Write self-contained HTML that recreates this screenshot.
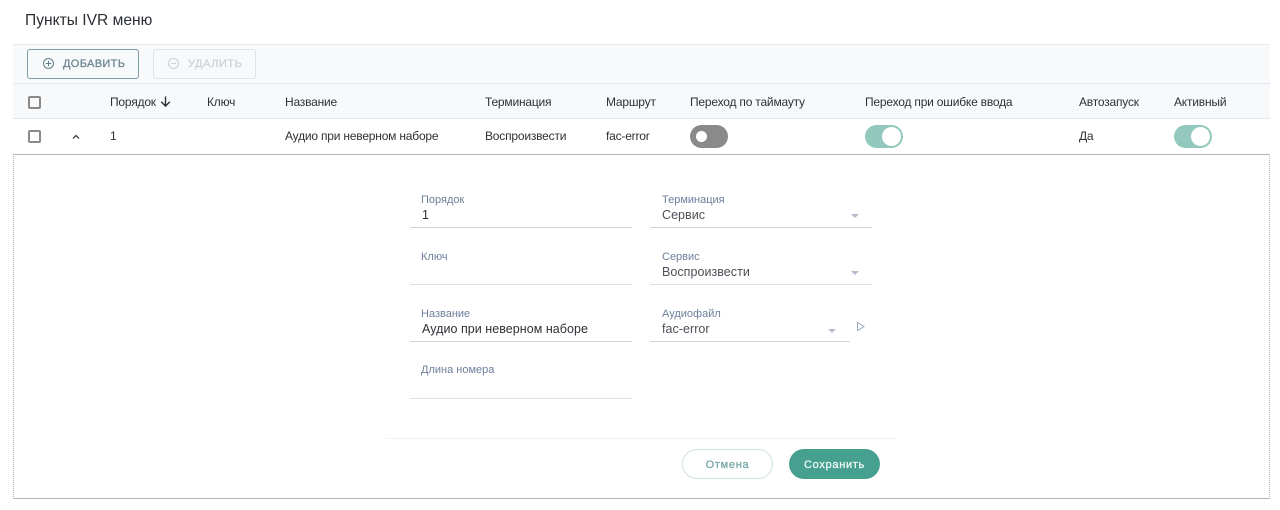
<!DOCTYPE html>
<html lang="ru"><head><meta charset="utf-8"><title>Пункты IVR меню</title>
<style>
html,body{margin:0;padding:0;width:1280px;height:510px;overflow:hidden;background:#fff}
body{font-family:"Liberation Sans","Noto Sans CJK SC",sans-serif;color:#2b2f33;position:relative}
.a{position:absolute;white-space:nowrap}
.th,.td{font-size:12px;line-height:16px;color:#2d3136;letter-spacing:-.2px}
.th{top:94px}.td{top:128px}
.cb{position:absolute;left:28px;width:9px;height:9px;border:2px solid #8a8a8a;border-radius:2px;box-sizing:content-box}
.sw{position:absolute;top:125px;width:38px;height:23px;border-radius:12px}
.sw i{position:absolute;top:2px;width:19px;height:19px;border-radius:50%;background:#fff}
.lab{font-size:11px;line-height:14px;color:#6d7f9b}
.val{font-size:12.5px;line-height:16px;color:#2d3136;letter-spacing:.04px}
.ln{position:absolute;height:1px;background:#cfd5de}
.ar{position:absolute;width:0;height:0;border-left:4px solid transparent;border-right:4px solid transparent;border-top:4px solid #b5bccb}
.btn{font-size:11px;letter-spacing:.7px;-webkit-text-stroke:.3px currentColor}
</style></head><body>
<div class="a" style="left:25px;top:12px;font-size:15.6px;line-height:18px;color:#2b2f33">Пункты IVR меню</div>

<div class="a" style="left:13px;top:44px;width:1257px;height:74px;background:#f8f9fb"></div>
<div class="ln" style="left:13px;top:44px;width:1257px;background:#e8eaee"></div>
<div class="ln" style="left:13px;top:83px;width:1257px;background:#e3e6ea"></div>
<div class="ln" style="left:13px;top:118px;width:1257px;background:#e3e6ea"></div>

<div class="a" style="left:27px;top:49px;width:110px;height:28px;border:1px solid #7f9ea8;border-radius:3px"></div>
<svg class="a" style="left:42px;top:57px" width="13" height="13" viewBox="0 0 13 13" fill="none" stroke="#5f7f88" stroke-width="1"><circle cx="6.5" cy="6.5" r="5"/><path d="M6.5 3.8v5.4M3.8 6.5h5.4"/></svg>
<div class="a btn" style="left:63px;top:56px;line-height:16px;color:#6b8790;letter-spacing:.35px">ДОБАВИТЬ</div>
<div class="a" style="left:153px;top:49px;width:101px;height:28px;border:1px solid #dfe3e6;border-radius:3px"></div>
<svg class="a" style="left:167px;top:57px" width="13" height="13" viewBox="0 0 13 13" fill="none" stroke="#c9d0d4" stroke-width="1"><circle cx="6.5" cy="6.5" r="5"/><path d="M3.8 6.5h5.4"/></svg>
<div class="a btn" style="left:188px;top:56px;line-height:16px;color:#ccd2d6;letter-spacing:.55px">УДАЛИТЬ</div>

<div class="cb" style="top:96px"></div>
<div class="a th" style="left:110px">Порядок</div>
<svg class="a" style="left:159px;top:95px" width="13" height="13" viewBox="0 0 13 13" fill="none" stroke="#2d3136" stroke-width="1.4"><path d="M6.5 1.5v9.5M2.2 6.8l4.3 4.3 4.3-4.3"/></svg>
<div class="a th" style="left:207px">Ключ</div>
<div class="a th" style="left:285px">Название</div>
<div class="a th" style="left:485px">Терминация</div>
<div class="a th" style="left:606px">Маршрут</div>
<div class="a th" style="left:690px">Переход по таймауту</div>
<div class="a th" style="left:865px">Переход при ошибке ввода</div>
<div class="a th" style="left:1079px">Автозапуск</div>
<div class="a th" style="left:1174px">Активный</div>

<div class="cb" style="top:130px"></div>
<svg class="a" style="left:72px;top:134px" width="8" height="6" viewBox="0 0 8 6" fill="none" stroke="#3a3f44" stroke-width="1.3"><path d="M1 4.5l3-3 3 3"/></svg>
<div class="a td" style="left:110px">1</div>
<div class="a td" style="left:285px">Аудио при неверном наборе</div>
<div class="a td" style="left:485px">Воспроизвести</div>
<div class="a td" style="left:606px">fac-error</div>
<div class="sw" style="left:690px;background:#8a8a8a"><i style="left:6px;top:6px;width:11px;height:11px"></i></div>
<div class="sw" style="left:865px;background:#93c8bd"><i style="left:17px"></i></div>
<div class="a td" style="left:1079px">Да</div>
<div class="sw" style="left:1174px;background:#93c8bd"><i style="left:17px"></i></div>

<div class="a" style="left:13px;top:154px;width:1257px;height:345px;box-sizing:border-box;border-top:1px solid #b5b5b5;border-bottom:1px solid #b5b5b5;border-left:1px dotted #b5b5b5;border-right:1px dotted #b5b5b5"></div>

<div class="a lab" style="left:421px;top:193px">Порядок</div>
<div class="a val" style="left:422px;top:207px">1</div>
<div class="ln" style="left:410px;top:227px;width:222px"></div>
<div class="a lab" style="left:421px;top:250px">Ключ</div>
<div class="ln" style="left:410px;top:284px;width:222px;background:#dde1e7"></div>
<div class="a lab" style="left:421px;top:307px">Название</div>
<div class="a val" style="left:422px;top:321px">Аудио при неверном наборе</div>
<div class="ln" style="left:410px;top:341px;width:222px"></div>
<div class="a lab" style="left:421px;top:363px">Длина номера</div>
<div class="ln" style="left:410px;top:398px;width:222px;background:#dde1e7"></div>

<div class="a lab" style="left:662px;top:193px">Терминация</div>
<div class="a val" style="left:662px;top:207px;color:#4b5158">Сервис</div>
<div class="ar" style="left:851px;top:214px"></div>
<div class="ln" style="left:650px;top:227px;width:222px"></div>
<div class="a lab" style="left:662px;top:250px">Сервис</div>
<div class="a val" style="left:662px;top:264px;color:#4b5158">Воспроизвести</div>
<div class="ar" style="left:851px;top:271px"></div>
<div class="ln" style="left:650px;top:284px;width:222px;background:#dde1e7"></div>
<div class="a lab" style="left:662px;top:307px">Аудиофайл</div>
<div class="a val" style="left:662px;top:321px;color:#4b5158">fac-error</div>
<div class="ar" style="left:828px;top:329px"></div>
<div class="ln" style="left:650px;top:341px;width:200px"></div>
<svg class="a" style="left:856px;top:321px" width="10" height="11" viewBox="0 0 10 11" fill="none" stroke="#9aa8bd" stroke-width="1"><path d="M1.5 1.5l6.5 4-6.5 4z"/></svg>

<div class="ln" style="left:386px;top:438px;width:510px;background:#f0f1f3"></div>
<div class="a btn" style="left:682px;top:449px;width:91px;height:30px;box-sizing:border-box;border:1px solid #cfe0e0;border-radius:15px;text-align:center;line-height:30px;color:#75a8a6">Отмена</div>
<div class="a btn" style="left:789px;top:449px;width:91px;height:30px;border-radius:15px;background:#46a08f;text-align:center;line-height:32px;color:#eef7f5">Сохранить</div>
</body></html>
